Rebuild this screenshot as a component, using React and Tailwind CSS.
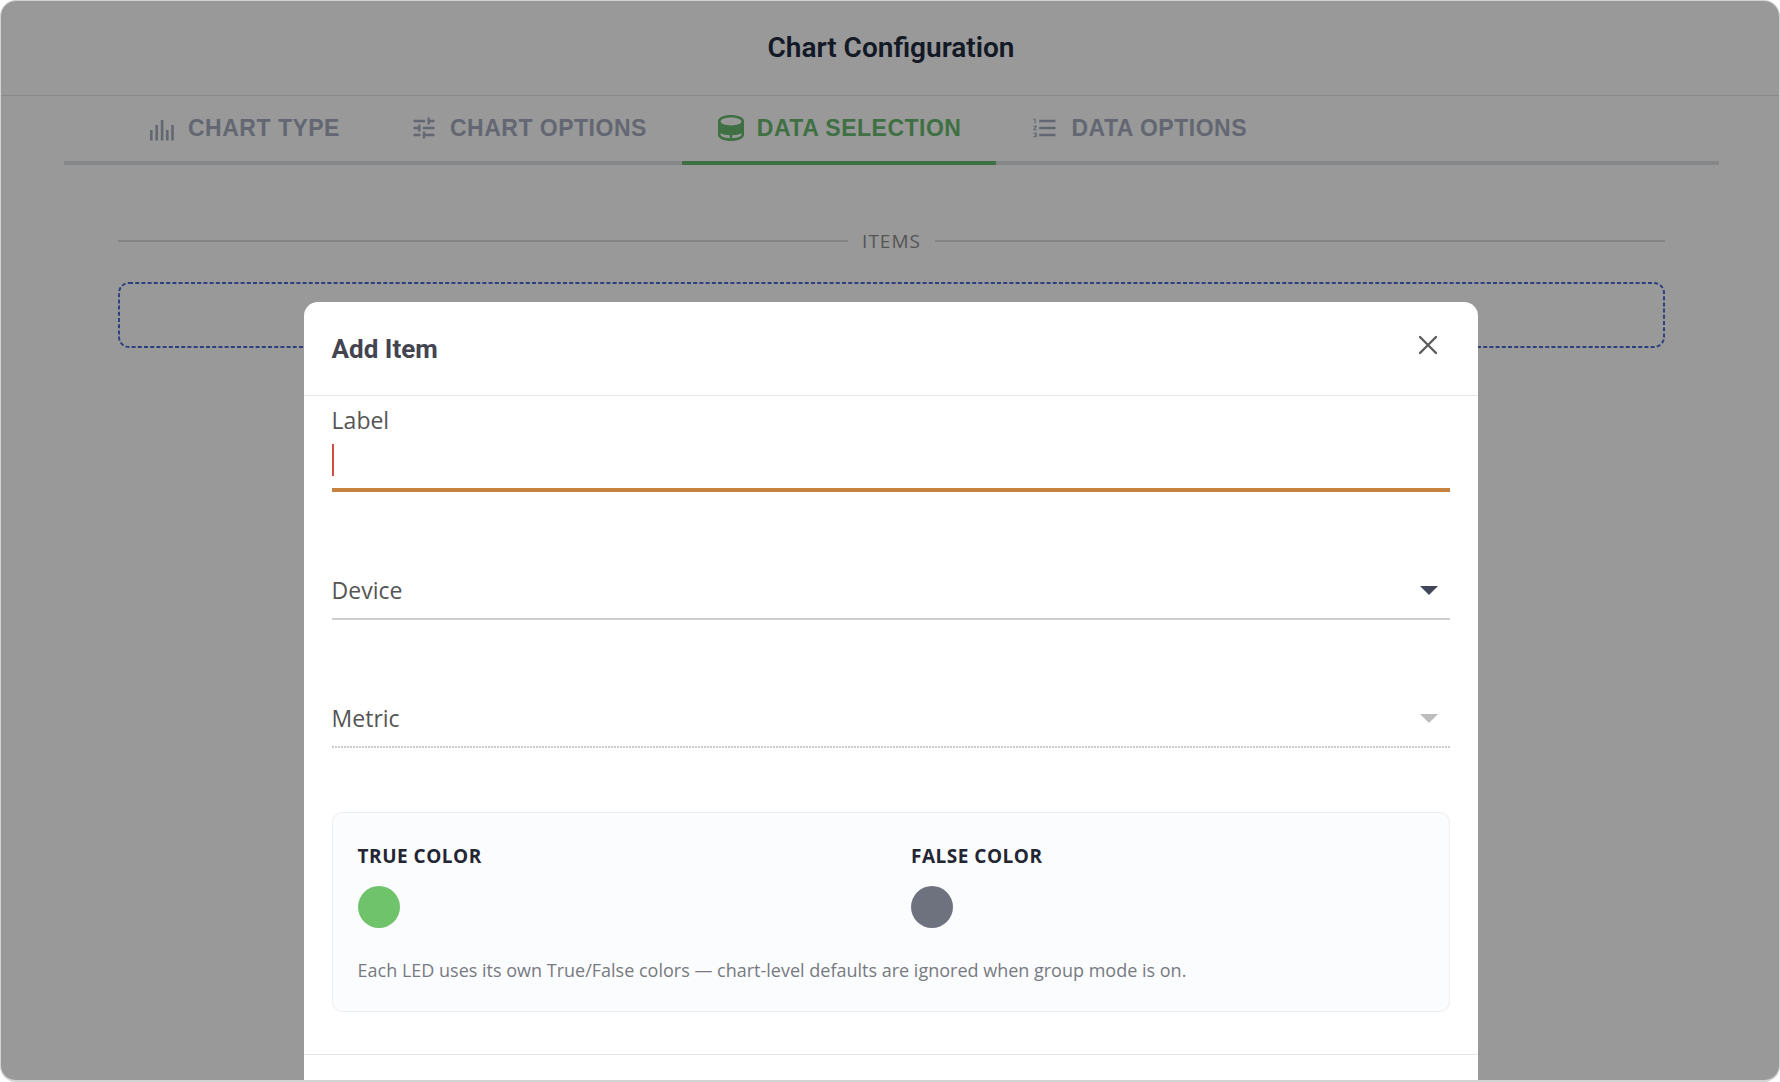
import { useState } from 'react'
import { MdTune, MdFormatListNumbered } from 'react-icons/md'

function BarsIcon() {
  return (
    <svg viewBox="0 0 28 28" className="size-7 shrink-0" fill="currentColor" aria-hidden="true">
      <rect x="2" y="16" width="2.6" height="10.5" />
      <rect x="7.4" y="11" width="2.6" height="15.5" />
      <rect x="12.8" y="6" width="2.6" height="20.5" />
      <rect x="18" y="16" width="2.6" height="10.5" />
      <rect x="23.2" y="11" width="2.6" height="15.5" />
    </svg>
  )
}

function DatabaseIcon() {
  return (
    <svg viewBox="0 0 28 28" className="size-7 shrink-0" aria-hidden="true">
      <path
        fill="currentColor"
        fillRule="evenodd"
        d="M14 1C6.8 1 1 3.6 1 7v14c0 3.4 5.8 6 13 6s13-2.600 13-6V7c0-3.400-5.800-6-13-6zm0 2.600c6 0 10.400 1.900 10.400 4S20 11.400 14 11.400 3.600 9.700 3.600 7.600s4.400-4 10.400-4zM3.600 19.200c2.300 1.200 5.600 1.900 9.200 2v3c-5.200-.2-9.200-1.600-9.200-3.400zm20.800 0v1.600c0 1.800-4 3.200-9.200 3.400v-3c3.600-.1 6.900-.8 9.200-2z"
      />
    </svg>
  )
}

const tabs = [
  { id: 'type', label: 'CHART TYPE', icon: <BarsIcon /> },
  { id: 'options', label: 'CHART OPTIONS', icon: <MdTune size={28} /> },
  { id: 'selection', label: 'DATA SELECTION', icon: <DatabaseIcon /> },
  { id: 'data', label: 'DATA OPTIONS', icon: <MdFormatListNumbered size={28} /> },
]

function SelectField({ id, label, disabled }) {
  return (
    <div>
      <div className="grid items-center">
        <label
          htmlFor={id}
          className="col-start-1 row-start-1 text-[23px] leading-8 text-[#555555] pointer-events-none"
        >
          {label}
        </label>
        <select
          id={id}
          disabled={disabled}
          className="col-start-1 row-start-1 w-full h-14 appearance-none bg-transparent outline-none"
        />
        <svg
          viewBox="0 0 18 9"
          aria-hidden="true"
          className={`col-start-1 row-start-1 justify-self-end mr-3 w-[18px] h-[9px] pointer-events-none ${
            disabled ? 'text-[#bdbdbd]' : 'text-[#41465a]'
          }`}
        >
          <path d="M0 0h18L9 9z" fill="currentColor" />
        </svg>
      </div>
      <div
        className={
          disabled
            ? 'h-0.5 bg-[repeating-linear-gradient(to_right,#cccccc_0_2px,transparent_2px_3px)]'
            : 'h-0.5 bg-[#cfcfcf]'
        }
      />
    </div>
  )
}

function ColorField({ label, swatch }) {
  return (
    <div>
      <div className="text-[19px] leading-6 font-bold tracking-[0.5px] text-[#232533]">{label}</div>
      <button type="button" aria-label={label} className={`block mt-[18px] size-[42px] rounded-full ${swatch}`} />
    </div>
  )
}

function AddItemDialog() {
  const [label, setLabel] = useState('')

  return (
    <div
      role="dialog"
      aria-labelledby="dialog-title"
      className="w-[66vw] shrink-0 bg-white rounded-t-[14px] font-['Segoe_UI','Open_Sans',sans-serif]"
    >
      <div className="flex items-center justify-between h-[94px] px-7 border-b border-[#e8e8e8]">
        <h2 id="dialog-title" className="font-[Roboto,sans-serif] text-[26px] leading-8 font-bold text-[#43444f]">
          Add Item
        </h2>
        <button type="button" aria-label="Close" className="mr-3 mb-2 text-[#5c5c5c]">
          <svg viewBox="0 0 20 20" className="size-5" fill="none" stroke="currentColor" strokeWidth="2.4" strokeLinecap="round">
            <path d="M2 2l16 16M18 2L2 18" />
          </svg>
        </button>
      </div>

      <div className="px-7 pt-2 pb-[42px]">
        <label htmlFor="item-label" className="block text-[23px] leading-8 text-[#555555]">
          Label
        </label>
        <div className="grid items-center h-14 pb-1 border-b-4 border-[#c6813f]">
          <input
            id="item-label"
            value={label}
            onChange={(e) => setLabel(e.target.value)}
            className="col-start-1 row-start-1 w-full h-12 text-[23px] outline-none caret-[#cc4f41]"
          />
          {!label && <span className="col-start-1 row-start-1 w-0.5 h-8 bg-[#cc4f41]" />}
        </div>

        <div className="mt-[70px]">
          <SelectField id="device" label="Device" />
        </div>
        <div className="mt-[70px]">
          <SelectField id="metric" label="Metric" disabled />
        </div>

        {/* LED colors */}
        <div className="mt-16 h-[200px] px-[25px] pt-[31px] rounded-[10px] border border-[#eceeef] bg-[#fbfcfe]">
          <div className="grid grid-cols-2 gap-x-10">
            <ColorField label="TRUE COLOR" swatch="bg-[#6fc36b]" />
            <ColorField label="FALSE COLOR" swatch="bg-[#6e727e]" />
          </div>
          <p className="mt-[30px] text-[18px] leading-6 text-[#777a80]">
            Each LED uses its own True/False colors — chart-level defaults are ignored when group mode is on.
          </p>
        </div>
      </div>

      <div className="h-24 border-t border-[#e8e8e8]" />
    </div>
  )
}

export default function App() {
  const [active, setActive] = useState('selection')

  return (
    <div className="h-screen bg-white">
      <div className="relative h-full overflow-hidden rounded-2xl border border-b-2 border-[#d2d4d4] bg-white">
        <header className="flex items-center justify-center h-[95px] pl-0.5 border-b border-[#e4e4e4]">
          <h1 className="font-[Roboto,sans-serif] text-[28px] leading-8 font-semibold text-[#202a3e]">
            Chart Configuration
          </h1>
        </header>

        <main className="pl-[63px] pr-[60px]">
          <div role="tablist" className="flex h-[69px] pl-[49px] border-b-4 border-[#e0e2e5]">
            {tabs.map((tab) => (
              <button
                key={tab.id}
                type="button"
                role="tab"
                aria-selected={active === tab.id}
                onClick={() => setActive(tab.id)}
                className={`flex items-center gap-3 -mb-1 pb-0.5 px-[35px] border-b-4 font-['Liberation_Sans',Arial,sans-serif] text-[23px] leading-7 font-bold tracking-[0.5px] ${
                  active === tab.id ? 'text-[#69bb71] border-[#69bb71]' : 'text-[#a5acbe] border-transparent'
                }`}
              >
                {tab.icon}
                {tab.label}
              </button>
            ))}
          </div>

          <section className="px-[54px] pt-16">
            <div className="flex items-center gap-3.5">
              <div className="flex-1 h-0.5 bg-[#dcdcdc]" />
              <span className="font-['Segoe_UI','Open_Sans',sans-serif] text-[19px] leading-6 tracking-[1px] text-[#8e8e8e]">
                ITEMS
              </span>
              <div className="flex-1 h-0.5 bg-[#dcdcdc]" />
            </div>
            <button type="button" aria-label="Add item" className="block w-full h-[66px] mt-[29px] p-px text-[#4e6cd5]">
              <svg className="w-full h-full overflow-visible" fill="none" stroke="currentColor" strokeWidth="2" aria-hidden="true">
                <rect width="100%" height="100%" rx="10" strokeDasharray="4 2.2" />
              </svg>
            </button>
          </section>
        </main>

        <div className="absolute inset-0 flex items-start justify-center pt-[301px] pl-0.5 bg-black/40">
          <AddItemDialog />
        </div>
      </div>
    </div>
  )
}
